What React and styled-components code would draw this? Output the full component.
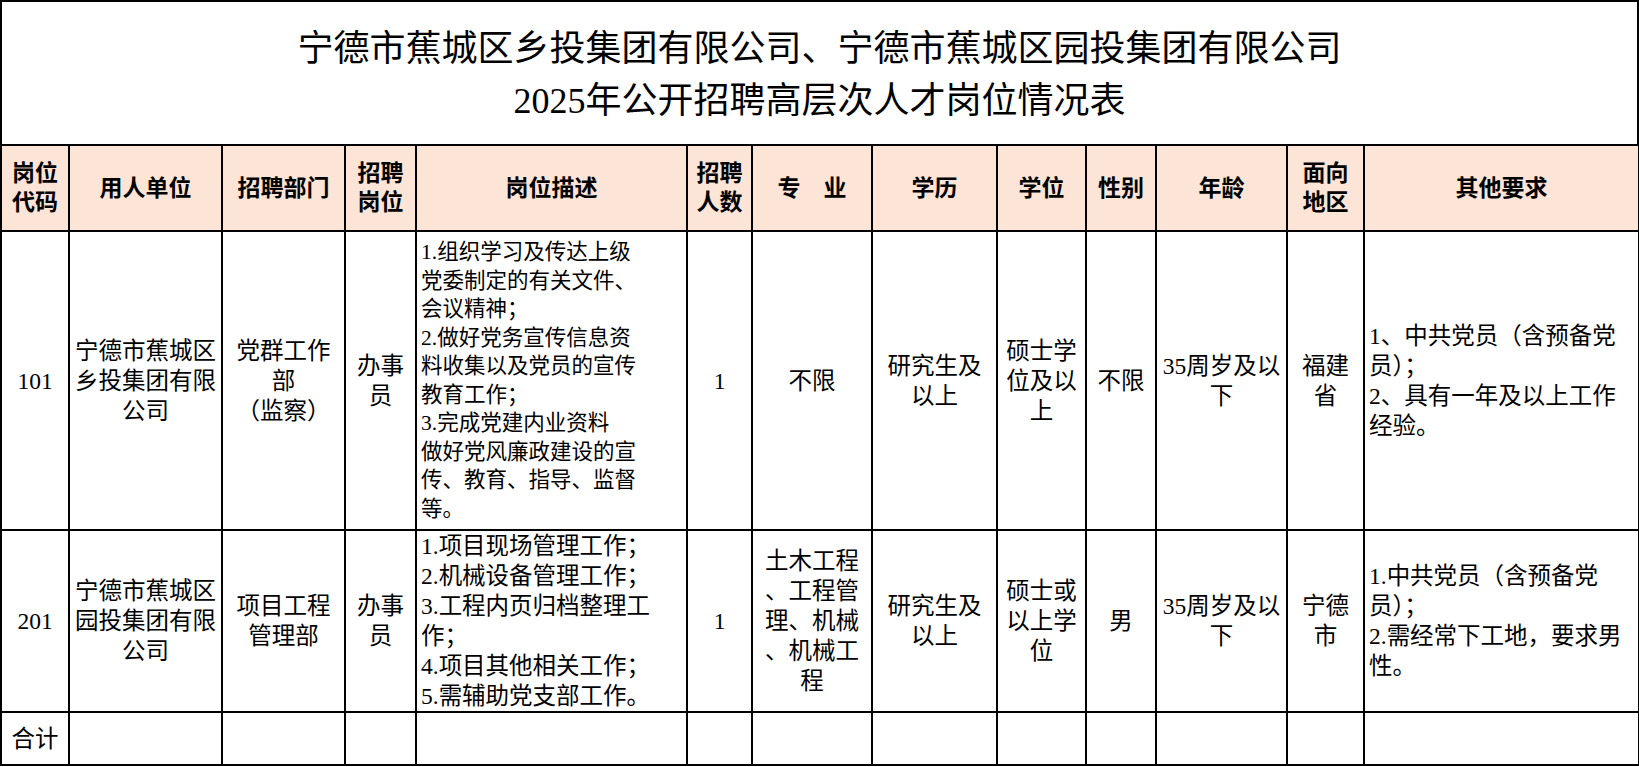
import React from 'react';
import styled, { createGlobalStyle } from 'styled-components';

const GlobalStyle = createGlobalStyle`
  html, body {
    margin: 0;
    padding: 0;
    background: #fff;
  }
  body {
    font-family: "Liberation Serif", "Noto Sans CJK SC", serif;
    color: #000;
  }
`;

const Sheet = styled.div`
  width: 1639px;
  box-sizing: border-box;
`;

const TitleBox = styled.div`
  height: 144px;
  box-sizing: border-box;
  border: 2px solid #000;
  border-bottom: none;
  display: flex;
  flex-direction: column;
  align-items: center;
  justify-content: center;
  font-size: 36px;
  line-height: 52px;
  font-weight: 400;
  padding-top: 4px;
`;

const Table = styled.table`
  width: 1639px;
  table-layout: fixed;
  border-collapse: collapse;
`;

const Row = styled.tr`
  height: ${p => p.$h}px;
`;

const HeadCell = styled.th`
  border: 2px solid #000;
  background: #fce4d6;
  font-weight: 700;
  font-size: 23px;
  line-height: 29px;
  text-align: center;
  vertical-align: middle;
  padding: 0;
  white-space: nowrap;
`;

const Cell = styled.td`
  border: 2px solid #000;
  font-size: ${p => (p.$small ? 21.5 : 23.5)}px;
  line-height: ${p => (p.$small ? 28.5 : 30)}px;
  text-align: ${p => p.$align || 'center'};
  padding: ${p => (p.$align === 'left' ? '0 0 0 4px' : '0')};
  vertical-align: middle;
  white-space: nowrap;
  overflow: hidden;
`;

const colWidths = [68, 153, 123, 71, 271, 65, 120, 125, 89, 70, 131, 77, 275];

const header = [
  ['岗位', '代码'],
  ['用人单位'],
  ['招聘部门'],
  ['招聘', '岗位'],
  ['岗位描述'],
  ['招聘', '人数'],
  ['专　业'],
  ['学历'],
  ['学位'],
  ['性别'],
  ['年龄'],
  ['面向', '地区'],
  ['其他要求'],
];

const rows = [
  {
    h: 299,
    cells: [
      { lines: ['101'] },
      { lines: ['宁德市蕉城区', '乡投集团有限', '公司'] },
      { lines: ['党群工作', '部', '（监察）'] },
      { lines: ['办事', '员'] },
      {
        align: 'left',
        small: true,
        lines: [
          '1.组织学习及传达上级',
          '党委制定的有关文件、',
          '会议精神；',
          '2.做好党务宣传信息资',
          '料收集以及党员的宣传',
          '教育工作；',
          '3.完成党建内业资料',
          '做好党风廉政建设的宣',
          '传、教育、指导、监督',
          '等。',
        ],
      },
      { lines: ['1'] },
      { lines: ['不限'] },
      { lines: ['研究生及', '以上'] },
      { lines: ['硕士学', '位及以', '上'] },
      { lines: ['不限'] },
      { lines: ['35周岁及以', '下'] },
      { lines: ['福建', '省'] },
      {
        align: 'left',
        lines: ['1、中共党员（含预备党', '员）；', '2、具有一年及以上工作', '经验。'],
      },
    ],
  },
  {
    h: 180,
    cells: [
      { lines: ['201'] },
      { lines: ['宁德市蕉城区', '园投集团有限', '公司'] },
      { lines: ['项目工程', '管理部'] },
      { lines: ['办事', '员'] },
      {
        align: 'left',
        lines: [
          '1.项目现场管理工作；',
          '2.机械设备管理工作；',
          '3.工程内页归档整理工',
          '作；',
          '4.项目其他相关工作；',
          '5.需辅助党支部工作。',
        ],
      },
      { lines: ['1'] },
      { lines: ['土木工程', '、工程管', '理、机械', '、机械工', '程'] },
      { lines: ['研究生及', '以上'] },
      { lines: ['硕士或', '以上学', '位'] },
      { lines: ['男'] },
      { lines: ['35周岁及以', '下'] },
      { lines: ['宁德', '市'] },
      {
        align: 'left',
        lines: ['1.中共党员（含预备党', '员）；', '2.需经常下工地，要求男', '性。'],
      },
    ],
  },
  {
    h: 53,
    cells: [{ lines: ['合计'] }, ...Array.from({ length: 12 }, () => ({ lines: [] }))],
  },
];

const Lines = ({ lines }) =>
  lines.map((line, i) => (
    <React.Fragment key={i}>
      {i > 0 && <br />}
      {line}
    </React.Fragment>
  ));

export default function App() {
  return (
    <>
      <GlobalStyle />
      <Sheet>
        <TitleBox>
          <div>宁德市蕉城区乡投集团有限公司、宁德市蕉城区园投集团有限公司</div>
          <div>2025年公开招聘高层次人才岗位情况表</div>
        </TitleBox>
        <Table>
          <colgroup>
            {colWidths.map((w, i) => (
              <col key={i} style={{ width: w }} />
            ))}
          </colgroup>
          <thead>
            <Row $h={86}>
              {header.map((lines, i) => (
                <HeadCell key={i}>
                  <Lines lines={lines} />
                </HeadCell>
              ))}
            </Row>
          </thead>
          <tbody>
            {rows.map((row, r) => (
              <Row key={r} $h={row.h}>
                {row.cells.map((c, i) => (
                  <Cell key={i} $align={c.align} $small={c.small}>
                    <Lines lines={c.lines} />
                  </Cell>
                ))}
              </Row>
            ))}
          </tbody>
        </Table>
      </Sheet>
    </>
  );
}
